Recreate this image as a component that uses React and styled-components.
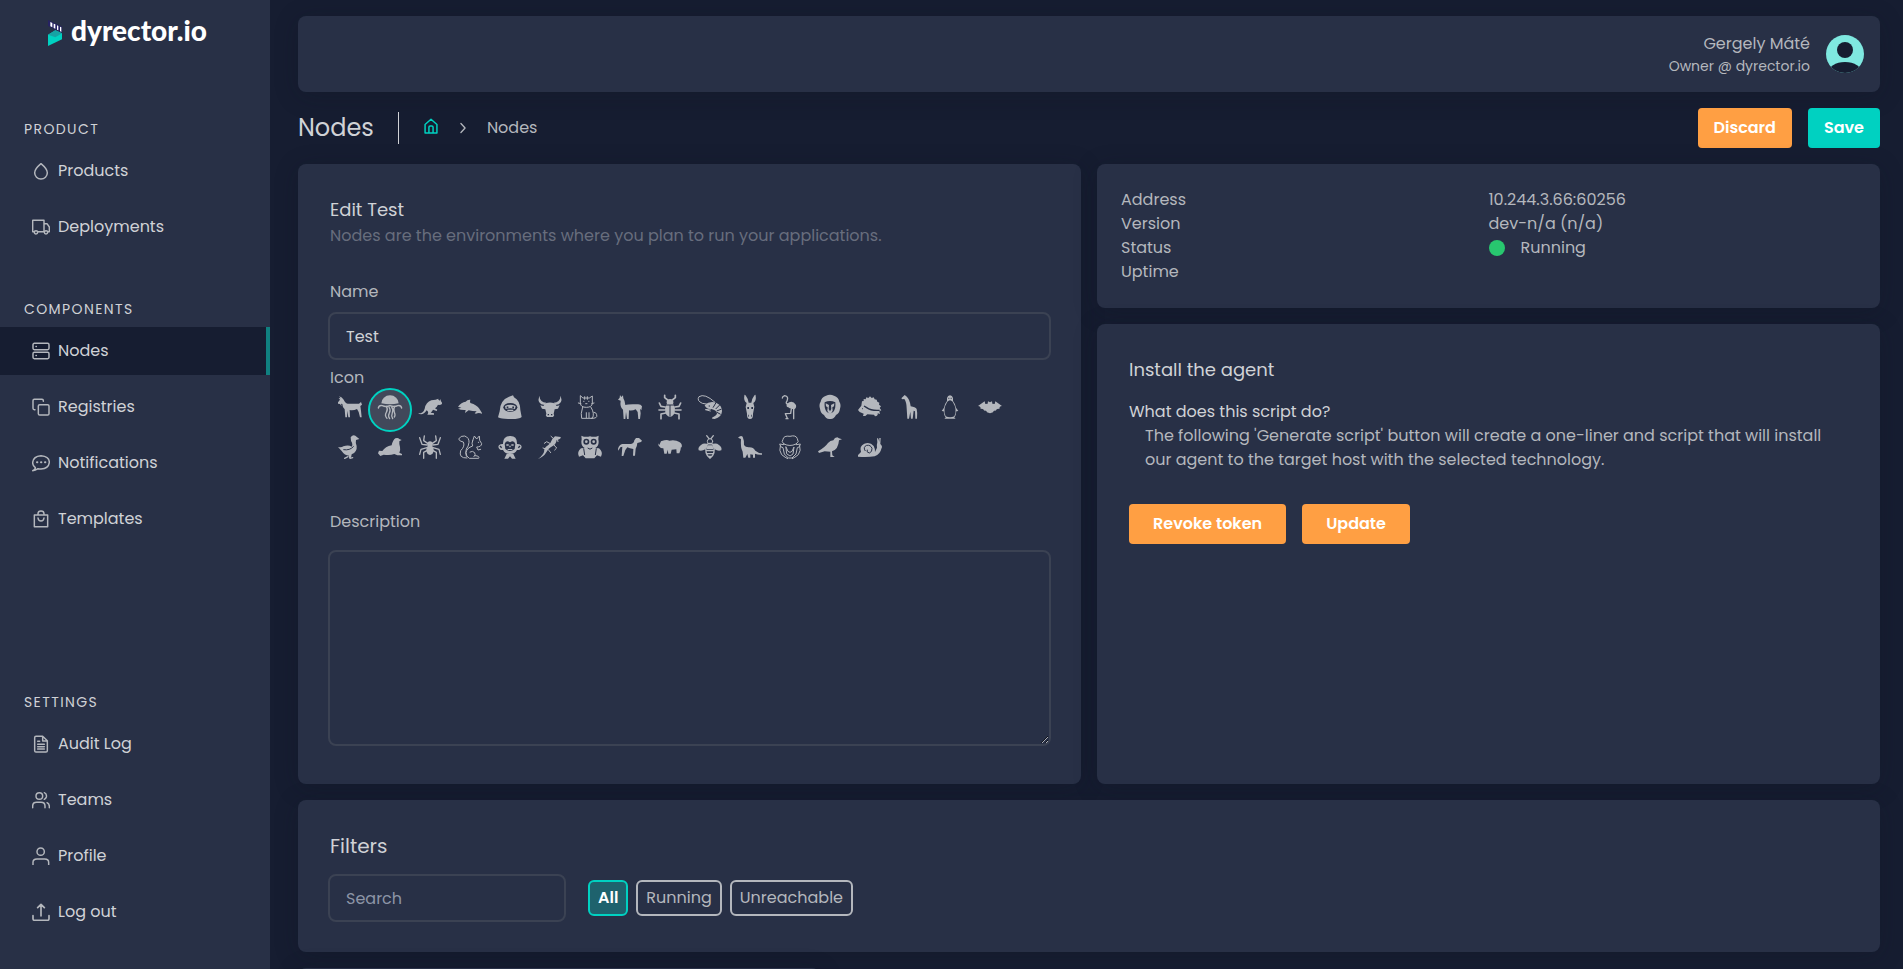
import React, { useState } from "react";
import styled, { createGlobalStyle, css } from "styled-components";

const c = {
  page: "#161d31",
  panel: "#283046",
  border: "#3b4253",
  text: "#b4b7bd",
  bright: "#d0d2d6",
  muted: "#676d7d",
  placeholder: "#8d95a6",
  teal: "#00d1c1",
  orange: "#ff9f43",
  green: "#28c76f",
};

const GlobalStyle = createGlobalStyle`
  * { box-sizing: border-box; }
  body {
    margin: 0;
    background: ${c.page};
    color: ${c.text};
    font: 400 16px/24px Poppins, Inter, "Liberation Sans", sans-serif;
  }
  h1, h2, h3, p, ul, dl, dd, fieldset { margin: 0; padding: 0; border: 0; font-weight: 400; }
  ul { list-style: none; }
  button, input, textarea { font: inherit; }
`;

const Shell = styled.div`
  display: flex;
  height: 100vh;
  overflow: hidden;
`;

/* ---------- sidebar ---------- */

const Sidebar = styled.nav`
  flex: 0 0 270px;
  display: flex;
  flex-direction: column;
  padding-bottom: 33px;
  background: ${c.panel};
`;

const Brand = styled.a`
  display: flex;
  align-items: center;
  gap: 9px;
  height: 66px;
  margin-bottom: 53px;
  padding-left: 48px;
  color: #fff;
  text-decoration: none;
  font: 900 28px/32px Lato, sans-serif;
  svg { width: 14px; height: 26px; }
  span { padding-bottom: 6px; }
`;

const NavGroup = styled.section`
  margin-bottom: 48px;
  ${(p) => p.$bottom && css`margin: auto 0 0;`}
`;

const NavHeading = styled.h2`
  margin-bottom: 8px;
  padding-left: 24px;
  font-size: 14px;
  line-height: 20px;
  letter-spacing: 0.1em;
  text-transform: uppercase;
  color: ${c.bright};
`;

const NavList = styled.ul`
  display: flex;
  flex-direction: column;
  gap: 8px;
`;

const NavLink = styled.a`
  display: flex;
  align-items: center;
  gap: 8px;
  height: 48px;
  padding-left: 32px;
  color: ${c.bright};
  text-decoration: none;
  border-right: 4px solid ${(p) => (p.$active ? "#108080" : "transparent")};
  background: ${(p) => (p.$active ? c.page : "none")};
  svg { width: 18px; height: 18px; color: ${c.text}; }
`;

/* ---------- main column ---------- */

const Main = styled.main`
  flex: 1;
  min-width: 0;
  overflow: hidden;
  display: flex;
  flex-direction: column;
  gap: 16px;
  padding: 16px 23px 0 28px;
  > * { flex-shrink: 0; }
`;

const Card = styled.section`
  background: ${c.panel};
  border-radius: 8px;
  box-shadow: 0 4px 24px rgba(15, 20, 34, 0.24);
`;

const TopBar = styled(Card).attrs({ as: "header" })`
  display: flex;
  align-items: center;
  justify-content: flex-end;
  gap: 16px;
  height: 76px;
  padding-right: 16px;
  text-align: right;
  svg { width: 38px; height: 38px; }
`;

const UserRole = styled.div`
  font-size: 14px;
  line-height: 20px;
`;

const TitleRow = styled.div`
  display: flex;
  align-items: center;
  height: 40px;
`;

const PageTitle = styled.h1`
  padding-right: 24px;
  margin-right: 24px;
  font-size: 24px;
  line-height: 32px;
  color: ${c.bright};
  border-right: 1px solid ${c.bright};
`;

const Crumbs = styled.div`
  display: flex;
  align-items: center;
  gap: 16px;
  flex: 1;
  a { display: flex; padding-bottom: 4px; color: ${c.teal}; }
  svg { width: 16px; height: 16px; }
`;

const ButtonRow = styled.div`
  display: flex;
  gap: 16px;
  margin-top: ${(p) => (p.$spaced ? "32px" : 0)};
`;

const Button = styled.button`
  height: 40px;
  padding: 0 ${(p) => (p.$wide ? 24 : 16)}px;
  border: 0;
  border-radius: 4px;
  color: #fff;
  font-weight: 600;
  background: ${(p) => (p.$teal ? c.teal : c.orange)};
`;

const Columns = styled.div`
  display: grid;
  grid-template-columns: 1fr 1fr;
  gap: 16px;
`;

const Stack = styled.div`
  display: flex;
  flex-direction: column;
  gap: 16px;
`;

const FormCard = styled(Card)`
  display: flex;
  flex-direction: column;
  padding: 32px 30px 38px;
`;

const CardTitle = styled.h2`
  padding-left: ${(p) => (p.$inset ? 2 : 0)}px;
  font-size: ${(p) => (p.$large ? 20 : 18)}px;
  line-height: 28px;
  color: ${c.bright};
`;

const Hint = styled.p`
  padding-left: 2px;
  color: ${c.muted};
`;

const Label = styled.label`
  margin: ${(p) => p.$top}px 0 ${(p) => p.$bottom}px;
  padding-left: 2px;
`;

const field = css`
  width: 100%;
  padding: 0 16px;
  color: ${c.bright};
  background: transparent;
  border: 2px solid ${c.border};
  border-radius: 8px;
  outline: none;
  &::placeholder { color: ${c.placeholder}; }
`;

const TextInput = styled.input`
  ${field}
  height: 48px;
  max-width: ${(p) => p.$max || "none"};
`;

const TextArea = styled.textarea`
  ${field}
  height: 196px;
  padding: 8px 16px;
  resize: vertical;
`;

const IconPicker = styled.div`
  display: flex;
  flex-wrap: wrap;
  padding: 0 2px;
`;

const IconChoice = styled.label`
  position: relative;
  display: flex;
  justify-content: center;
  width: 40px;
  height: 40px;
  padding-top: 5px;
  svg { position: relative; width: 24px; height: 24px; overflow: visible; }
  input {
    appearance: none;
    position: absolute;
    inset: -2px;
    margin: 0;
    border-radius: 50%;
  }
  input:checked {
    border: 2px solid ${c.teal};
    background: #41485a;
  }
`;

const Facts = styled(Card).attrs({ as: "dl" })`
  display: grid;
  grid-template-columns: 1fr 1fr;
  grid-auto-rows: 24px;
  padding: 24px;
`;

const Status = styled.dd`
  display: flex;
  align-items: center;
  gap: 16px;
  &::before {
    content: "";
    width: 16px;
    height: 16px;
    border-radius: 50%;
    background: ${c.green};
  }
`;

const InstallCard = styled(Card)`
  flex: 1;
  padding: 32px;
`;

const Question = styled.h3`
  margin-top: 16px;
  font-size: 16px;
  line-height: 24px;
  color: ${c.bright};
`;

const Answer = styled.p`
  padding-left: 16px;
`;

const FilterCard = styled(Card)`
  padding: 32px 30px 30px;
`;

const FilterRow = styled.div`
  display: flex;
  align-items: center;
  gap: 22px;
  margin-top: 14px;
`;

const Chips = styled.div`
  display: flex;
  gap: 8px;
`;

const Chip = styled.button`
  height: 36px;
  padding: 0 8px;
  border: 2px solid ${c.text};
  border-radius: 6px;
  color: ${c.text};
  background: transparent;
  ${(p) =>
    p.$on &&
    css`
      border-color: ${c.teal};
      background: #1e626d;
      color: #fff;
      font-weight: 600;
    `}
`;

const NodeGrid = styled.div`
  display: grid;
  grid-template-columns: repeat(3, 1fr);
  column-gap: 8px;
`;

const NodeCard = styled(Card)`
  height: 180px;
`;

/* ---------- drawings ---------- */

const Line = ({ w = 4.4, children }) => (
  <svg viewBox="0 0 54 54" fill="none" stroke="currentColor" strokeWidth={w} strokeLinecap="round" strokeLinejoin="round" aria-hidden="true">
    {children}
  </svg>
);

const navIcons = {
  Products: <Line><path d="M27 5Q8 21 8 32a19 19 0 0 0 38 0Q46 21 27 5z" /></Line>,
  Deployments: (
    <Line>
      <path d="M7 41H2V7h34v34H18M36 17h9l7 10v14h-4" />
      <circle cx="12" cy="43" r="5" /><circle cx="42" cy="43" r="5" />
    </Line>
  ),
  Nodes: (
    <Line>
      <rect x="3" y="4" width="48" height="19" rx="4" /><rect x="3" y="31" width="48" height="19" rx="4" />
      <path d="M12 13.500h1M12 40.500h1" />
    </Line>
  ),
  Registries: (
    <Line>
      <rect x="19" y="20" width="32" height="31" rx="4" />
      <path d="M34 10V8q0-4-4-4H7q-4 0-4 4v23q0 4 4 4h2" />
    </Line>
  ),
  Notifications: (
    <Line>
      <path d="M2 50q8-3 8-9Q2 35 2 26 3 7 27 5q25 2 25 20-2 19-25 20-5 0-9-1-8 6-16 6z" />
      <path d="M15 25h1M27 25h1M39 25h1" strokeWidth="6" />
    </Line>
  ),
  Templates: (
    <Line>
      <path d="M7 15h40v35H7zM18 15v-4q0-8 9-8t9 8v4M18 24q1 9 9 9t9-9" />
    </Line>
  ),
  "Audit Log": (
    <Line>
      <path d="M32 4H12q-4 0-4 4v39q0 4 4 4h30q4 0 4-4V17L32 4v14h14M17 19h6M17 28h20M17 35h20M17 42h20" />
    </Line>
  ),
  Teams: (
    <Line>
      <circle cx="22" cy="15" r="10" />
      <path d="M2 50v-5q0-11 12-11h13q12 0 12 11v5M37 5q8 3 6 13-1 4-6 7M45 35q7 3 7 11v4" />
    </Line>
  ),
  Profile: (
    <Line>
      <circle cx="26" cy="14" r="11" />
      <path d="M3 53v-7q0-10 12-10h23q12 0 12 10v7" />
    </Line>
  ),
  "Log out": (
    <Line w={5}>
      <path d="M27 39V4M17 14L27 4l10 10M3 38v9q0 5 5 5h38q5 0 5-5v-9" />
    </Line>
  ),
};

const Logo = () => (
  <svg viewBox="0 0 42 78" aria-hidden="true">
    <path d="M0 0l42 20v18L0 18z" fill="#262262" />
    <path d="M7 6l6 3v13l-6-3zM17 11l5 2v13l-5-2zM27 16l4 2v13l-4-2zM36 20l4 2v14l-4-3z" fill="#fff" />
    <path d="M0 44l22-13 20 9v18L0 78z" fill="#00d1c1" />
    <path d="M0 44l22-13 20 9-20 12z" fill="#17a2a4" />
  </svg>
);

const Avatar = () => (
  <svg viewBox="0 0 38 38" role="img" aria-label="Account">
    <defs><clipPath id="avatar"><circle cx="19" cy="19" r="19" /></clipPath></defs>
    <g clipPath="url(#avatar)">
      <rect width="38" height="38" fill="#7fe8e0" />
      <circle cx="19" cy="15" r="8" fill={c.page} />
      <ellipse cx="19" cy="38" rx="17" ry="11" fill={c.page} />
    </g>
  </svg>
);

const stroke = (w = 3) => ({ fill: "none", stroke: "currentColor", strokeWidth: w, strokeLinecap: "round", strokeLinejoin: "round" });
const cut = c.panel;

const animals = [
  ["Goat", <path d="M3 4q8 1 13 9l5 8q4 5 8 5h34l6-5 3 8-5 4 2 14 2 20h-5l-4-16-5-9q-10 5-22 3l1 22h-5l-3-20-1 20h-5l-2-24q-7-7-7-16l-4-1 2 8-5-7-6-1v-4l6-8-4-5 6 1z" />],
  ["Jellyfish", <>
    <path d="M10 25a26 24 0 0 1 52 0q-26 6-52 0z" />
    <path d="M1 39q2-9 12-7 10 5 23 0 13 5 23 0 10-2 12 7" {...stroke(4)} />
    <path d="M25 34q6 9 0 18t2 18M33 36q6 9 1 18t1 17M41 36q6 8 2 17t1 18M50 34q-5 9-1 18t0 14" {...stroke(4)} />
  </>],
  ["Kangaroo", <path d="M61 16L59 12l6 5 2-5 2 7q4 4 3 8-6 4-12 2-3 7-9 11l7 4-2 4-11-4q-2 5-7 9l10 2v4H28q6-8-2-13-12 18-26 9 16 1 20-14 4-20 20-25 15-1 21-5z" />],
  ["Dolphin", <path d="M0 35q10-14 23-15 5-7 14-6-2 5 0 10 20 6 27 17l8 13v2q-10-4-18 0l-4-1 6-6q-12 0-24-3l-11 8 2-9q-14 1-23-4l10-3z" />],
  ["Gorilla", <>
    <path d="M33 5l12-4 3 6q18 9 19 38l4 21q-9 7-34 6-26 1-37-5l5-18Q6 15 33 5z" />
    <ellipse cx="37" cy="37" rx="21" ry="13" fill={cut} />
    <path d="M21 33q16-8 32 0l-2 9q-14-5-28 0zM28 44h18v4H28z" />
    <path d="M26 37h5M43 37h5" stroke={cut} strokeWidth="5" />
  </>],
  ["Bull", <>
    <path d="M4 2Q-5 28 20 30l5-7Q6 22 4 2zM68 2q9 26-16 28l-5-7Q66 22 68 2z" />
    <path d="M23 25q13-5 26 0l7 8 9-2-5 10-10 2-3 13q4 6-2 10H27q-6-4-2-10l-3-13-10-2-5-10 9 2z" />
    <path d="M29 59h4M39 59h4" stroke={cut} strokeWidth="4" />
  </>],
  ["Cat", <g {...stroke(3)}>
    <path d="M7 3v22q1 12 18 12t18-12V3l-9 6H16zM14 36q-7 22-3 34h32q8-14-4-33M25 53v15M33 53v15M40 70q20 1 16-11-1-7-8-7M17 19h1M32 19h1M23 26h4M1 24l8 2M48 24l-7 2M20 5v8M28 5v8" />
  </g>],
  ["Llama", <path d="M6 0l4 6 5-5 1 9q5 8 6 20 8-3 34-2 12-2 16 6l-2 12-4-5 2 14-2 17h-5l-2-21-6-8q-10 5-20 3l-1 26h-5l-3-21-2 21h-5l-2-28Q5 36 8 17l-8-3 5-6z" />],
  ["Beetle", <>
    <ellipse cx="36" cy="44" rx="15" ry="22" /><circle cx="36" cy="22" r="10" />
    <path d="M29 15L20 8V1M43 15l9-7V1M21 36L9 34 4 24M51 36l12-2 5-10M20 45H3M52 45h17M23 54L9 57v14M49 54l14 3v14" {...stroke(5)} />
    <path d="M36 30v35M22 30h28" stroke={cut} strokeWidth="3" />
  </>],
  ["Shrimp", <>
    <path d="M20 31q15-15 34-8 18 7 18 26-1 18-22 23-13 0-6-5 13-6 13-13-2-9-17-12-14 2-20-11z" />
    <path d="M54 23L45 38M65 30L53 42M71 42l-15 6M68 58l-11-6M32 33h4" stroke={cut} strokeWidth="3" />
    <path d="M50 21Q20-6 3 5q-8 12 10 20l18 3M38 42l-16 2 15 4" {...stroke(3)} />
  </>],
  ["Donkey", <>
    <path d="M26 24Q16 17 19 3q0-7 5 0 7 9 8 20h8q1-11 8-20 5-7 5 0 3 14-7 21l3 12-4 20q1 16-9 16t-9-16l-4-20z" />
    <path d="M28 39h5M40 39h5M31 62h2M40 62h2" stroke={cut} strokeWidth="6" />
  </>],
  ["Flamingo", <>
    <path d="M27 26q16-13 27 4 2 9-5 13-14-1-18-6-8-2-4-11z" />
    <path d="M30 28q-9-3-3-10 6-14-7-16-7 2-7 7M40 42l-2 13-16 1 6 14M47 40v31M24 71h6" {...stroke(4)} />
  </>],
  ["Lion", <>
    <path d="M24 2q12-5 24 0 14 4 16 18 6 9 2 21-2 14-12 19-7 14-18 12-11 2-18-12Q8 55 6 41 2 29 8 20 10 6 24 2z" />
    <path d="M20 22q16-8 32 0 2 19-6 28-10 10-20 0-8-9-6-28z" fill={cut} />
    <path d="M23 25l10 5-1 12 4 7 4-7-1-12 10-5-1 9-5 3 1 10-5 9h-6l-5-9 1-10-5-3z" />
  </>],
  ["Hedgehog", <>
    <path d="M0 45l10-13 2-13 5-1v-6l6 1 2-6 6 2 5-5 5 5 6-2 3 6 6 1 2 6 6 3-1 6 6 5-4 5 5 7-6 3 2 8-7-2q2 8-8 9l-3-5-20-1-6 5h-7l2-7-12-5z" />
    <path d="M18 33l8 5q14 10 39 8M12 41h2" fill="none" stroke={cut} strokeWidth="4" />
  </>],
  ["Giraffe", <path d="M20 0l5 4q10 8 13 30 14 2 18 8 3 12 1 29h-5l-1-22-4-2-3 24h-5l-2-21-4 21h-5l-2-31Q26 22 19 12l-6 1-3-3z" />],
  ["Penguin", <>
    <path d="M27 18V9q2-8 9-8t9 8v9q8 10 9 20l7 10-6 1q-1 13-6 19l4 3H19l4-3q-5-6-6-19l-6-1 7-10q1-10 9-20z" />
    <path d="M28 20q8-9 16 0 15 24 5 44-13 6-26 0-10-20 5-44z" fill={cut} />
    <path d="M31 10h3M38 10h3" stroke={cut} strokeWidth="3" />
  </>],
  ["Bat", <path d="M0 33l20-14 2 8 7-1 1-7 6 3 6-3 1 7 7 1 2-8 20 14q-8 0-8 9-7-3-11 5-7-1-8 5l-9 3-9-3q-1-6-8-5-4-8-11-5 1-8-8-9z" />],
  ["Goose", <>
    <path d="M38 7q6-9 14-5l12 10-10 3q-2 6 2 18 2 18-15 25l-2 10-6 1v-7q-13 0-22-14L0 36q11 2 16-2 15-6 25 1 4-4 1-12-4-4-4-16z" />
    <path d="M16 44q20 3 31-10" fill="none" stroke={cut} strokeWidth="3" />
    <path d="M20 70l10-5M36 70l8-2" {...stroke(4)} />
  </>],
  ["Seal", <path d="M0 55l3-8 10 1q9-13 28-17 4-17 11-21 8-3 12 2l7 3-7 4q-1 9 2 17 2 12-2 17l8 4v4H58l-9-4q-13 5-32 2l-10 4z" />],
  ["Spider", <>
    <ellipse cx="36" cy="45" rx="11" ry="15" /><circle cx="36" cy="27" r="8" />
    <path d="M29 25L17 17 19 3M43 25l12-8-2-14M28 30L12 28 5 8M44 30l16-2 7-20M27 38L9 43 5 58M45 38l18 5 4 15M28 46l-11 6v18M44 46l11 6v18" {...stroke(4)} />
  </>],
  ["Squirrel", <g {...stroke(3)}>
    <path d="M27 69Q1 70 8 47q14-14 8-26-11-1-14-9Q8 1 20 3q14 5 13 19-1 12-8 20-4 12 0 22" />
    <path d="M44 17l5-14 7 9 8-9 1 13 6 10q-1 10-15 10l4 9 8-2M44 17q-4 8 0 16-18 6-20 20 0 11 10 17h28q4-7-10-8M36 51q8-5 14 2 4 6-2 12M61 22h1" />
  </g>],
  ["Monkey", <>
    <path d="M15 27Q14 4 36 3t21 24q12-1 14 8-2 11-14 10-6 12-21 12T15 45Q3 46 1 35q2-9 14-8z" />
    <path d="M20 27q4-13 16-5 12-8 16 5l-2 15q-14 12-28 0z" fill={cut} />
    <path d="M25 28h7v4h-7zM40 28h7v4h-7zM34 32h4v5h-4zM29 42h14v3H29zM26 57h20l7 14H42l-6-7-6 7H19z" />
    <path d="M6 33l5 5M66 33l-5 5" stroke={cut} strokeWidth="4" />
  </>],
  ["Lizard", <>
    <path d="M43 12l8-8 17 2q2 6-12 9-1 14-18 22-9 5-14 16Q17 65 0 72q20-14 19-29 2-8 12-13 7-5 12-18z" />
    <path d="M48 12l-9-8M58 13l2 7M37 26l-11-6-7 5M48 30l8 9-6 6M24 42l-9-3M31 44l7 9" {...stroke(3)} />
  </>],
  ["Owl", <>
    <path d="M10 2q13 6 26 2 13 4 26-2-2 9 0 18 0 13-10 19l11 1q14 12 6 25l-12-4-8 9H23l-8-9-12 4q-8-13 6-25l11-1Q10 33 10 20q2-9 0-18z" />
    <path d="M20 60L17 40M52 60l3-20M29 39q7 7 14 0" fill="none" stroke={cut} strokeWidth="3" />
    <circle cx="25" cy="20" r="9" fill={cut} /><circle cx="47" cy="20" r="9" fill={cut} />
    <circle cx="25" cy="20" r="4" /><circle cx="47" cy="20" r="4" />
  </>],
  ["Dog", <path d="M49 16l5-7h9l9 8-3 4-11 3q-1 12-5 17l-2 21h-6l1-20q-11-1-18-5l-6 8-6 18h-5l1-15 1-13-6 2-6 10-1-6q4-12 13-14h26q9-1 10-11z" />],
  ["Rhino", <path d="M0 25l4 5 5-11 10-3q9-3 15 1 19-3 30 4 10 5 7 17l-2-3q-1 12-5 20h-8l-1-12-14 1-3 12h-7l-2-12-3 12h-7l-3-16q-8 1-14-8z" />],
  ["Bee", <>
    <path d="M29 27q-12-4-20 3-10 7-7 16 9 4 20-3zM43 27q12-4 20 3 10 7 7 16-9 4-20-3z" />
    <circle cx="36" cy="19" r="8" {...stroke(3)} />
    <path d="M33 11l-7-9M39 11l7-9M27 28q9-5 18 0 10 28-9 42-19-14-9-42zM26 47h20M27 56h18M31 64h10" {...stroke(4)} />
    <path d="M28 31h16l2 12H26z" />
  </>],
  ["Diplodocus", <path d="M0 8q8-8 14-3 6 15 4 25 4 7 14 7 14-1 20 10 12 9 20 8v4q-12 1-21-3v12h-6v-9l-8-1v10h-6l-3-11-6 11h-6l-2-18q-7-11-5-38z" />],
  ["Sheep", <g {...stroke(3)}>
    <path d="M18 27q-10-7-3-14 2-12 21-9 18-5 22 7 7 10-4 16-18 9-36 0z" />
    <path d="M17 29L5 27q2 11 10 11l4 19 12 12h11l12-12 4-19q8 0 9-11l-12 2M7 32q-5 15 4 27 11 9 18 12M65 32q5 15-4 27-11 9-18 12" />
    <path d="M24 36l6 13 6 3 6-3 6-13-3 21-9 6-9-6z" />
  </g>],
  ["Crow", <path d="M46 16q4-9 12-9l5 3 9 3-9 3q-2 28-21 33l1 12 7 5H37v-16l-17-1L3 54l-3-5q21-12 30-25 7-7 16-8z" />],
  ["Snail", <>
    <path d="M0 60l9-9q-6-18 10-25 17-7 28 7 5 9 4 18l6-13q-1-10 1-16l-1-13 4 2 3 10V9h4l-1 18q8 7 3 14-3 16-20 23-21 3-50 1z" />
    <path d="M22 48q-8-12 4-17 12-2 16 9 1 11-8 14-10-2-6-10" fill="none" stroke={cut} strokeWidth="3" />
  </>],
];

const AnimalPicker = () => {
  const [selected, setSelected] = useState("Jellyfish");
  return (
    <IconPicker role="radiogroup" aria-label="Icon">
      {animals.map(([name, drawing]) => (
        <IconChoice key={name}>
          <input type="radio" name="icon" aria-label={name} checked={selected === name} onChange={() => setSelected(name)} />
          <svg viewBox="0 0 72 72" fill="currentColor" aria-hidden="true">{drawing}</svg>
        </IconChoice>
      ))}
    </IconPicker>
  );
};

const NavSection = ({ title, items, active, bottom }) => (
  <NavGroup $bottom={bottom}>
    <NavHeading>{title}</NavHeading>
    <NavList>
      {items.map((item) => (
        <li key={item}>
          <NavLink href="#" $active={item === active}>
            {navIcons[item]}
            {item}
          </NavLink>
        </li>
      ))}
    </NavList>
  </NavGroup>
);

export default function App() {
  const [filter, setFilter] = useState("All");
  return (
    <Shell>
      <GlobalStyle />
      <Sidebar>
        <Brand href="#"><Logo /><span>dyrector.io</span></Brand>
        <NavSection title="Product" items={["Products", "Deployments"]} />
        <NavSection title="Components" items={["Nodes", "Registries", "Notifications", "Templates"]} active="Nodes" />
        <NavSection title="Settings" items={["Audit Log", "Teams", "Profile", "Log out"]} bottom />
      </Sidebar>

      <Main>
        <TopBar>
          <div>
            <div>Gergely Máté</div>
            <UserRole>Owner @ dyrector.io</UserRole>
          </div>
          <Avatar />
        </TopBar>

        <TitleRow>
          <PageTitle>Nodes</PageTitle>
          <Crumbs>
            <a href="#" aria-label="Home">
              <Line w={5}><path d="M7 22L27 4l20 18v29H7zM20 51V31q0-4 4-4h6q4 0 4 4v20" /></Line>
            </a>
            <Line><path d="M20 12l14 15-14 15" /></Line>
            <span>Nodes</span>
          </Crumbs>
          <ButtonRow>
            <Button type="button">Discard</Button>
            <Button type="button" $teal>Save</Button>
          </ButtonRow>
        </TitleRow>

        <Columns>
          <FormCard>
            <CardTitle $inset>Edit Test</CardTitle>
            <Hint>Nodes are the environments where you plan to run your applications.</Hint>
            <Label htmlFor="name" $top={32} $bottom={8}>Name</Label>
            <TextInput id="name" defaultValue="Test" />
            <Label as="div" $top={6} $bottom={0}>Icon</Label>
            <AnimalPicker />
            <Label htmlFor="description" $top={40} $bottom={16}>Description</Label>
            <TextArea id="description" />
          </FormCard>

          <Stack>
            <Facts>
              <dt>Address</dt><dd>10.244.3.66:60256</dd>
              <dt>Version</dt><dd>dev-n/a (n/a)</dd>
              <dt>Status</dt><Status>Running</Status>
              <dt>Uptime</dt><dd />
            </Facts>
            <InstallCard>
              <CardTitle>Install the agent</CardTitle>
              <Question>What does this script do?</Question>
              <Answer>
                The following 'Generate script' button will create a one-liner and script that will install our agent to
                the target host with the selected technology.
              </Answer>
              <ButtonRow $spaced>
                <Button type="button" $wide>Revoke token</Button>
                <Button type="button" $wide>Update</Button>
              </ButtonRow>
            </InstallCard>
          </Stack>
        </Columns>

        <FilterCard>
          <CardTitle $inset $large>Filters</CardTitle>
          <FilterRow>
            <TextInput $max="238px" placeholder="Search" aria-label="Search" />
            <Chips>
              {["All", "Running", "Unreachable"].map((name) => (
                <Chip key={name} type="button" $on={filter === name} onClick={() => setFilter(name)}>{name}</Chip>
              ))}
            </Chips>
          </FilterRow>
        </FilterCard>

        <NodeGrid>
          <NodeCard />
        </NodeGrid>
      </Main>
    </Shell>
  );
}
